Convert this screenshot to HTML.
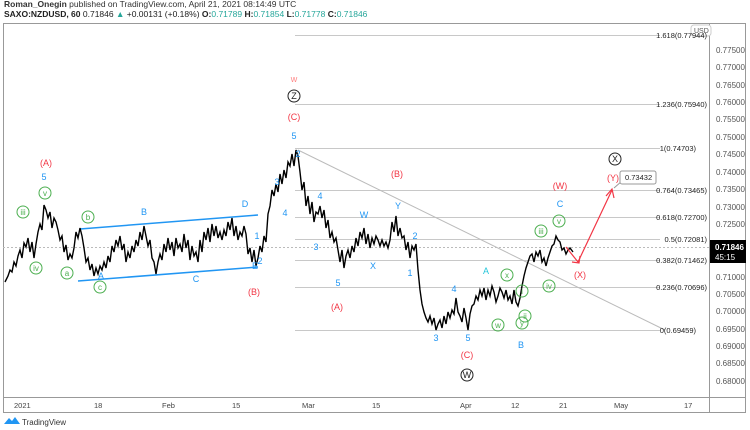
<!DOCTYPE html>
<html><head><meta charset="utf-8"><style>
html,body{margin:0;padding:0;background:#fff;width:750px;height:430px;overflow:hidden;font-family:"Liberation Sans",sans-serif}
svg{position:absolute;left:0;top:0}
</style></head><body>
<svg width="750" height="430" viewBox="0 0 750 430" font-family="Liberation Sans, sans-serif">
<text x="4" y="7" font-size="8.5" fill="#333"><tspan font-weight="bold">Roman_Onegin</tspan> published on TradingView.com, April 21, 2021 08:14:49 UTC</text>
<text x="4" y="17" font-size="8.5" fill="#222"><tspan font-weight="bold">SAXO:NZDUSD, 60</tspan> 0.71846 <tspan fill="#26a69a">▲</tspan> +0.00131 (+0.18%) <tspan font-weight="bold">O:</tspan><tspan fill="#26a69a">0.71789</tspan> <tspan font-weight="bold">H:</tspan><tspan fill="#26a69a">0.71854</tspan> <tspan font-weight="bold">L:</tspan><tspan fill="#26a69a">0.71778</tspan> <tspan font-weight="bold">C:</tspan><tspan fill="#26a69a">0.71846</tspan></text>
<rect x="3.5" y="23.5" width="742" height="389" fill="none" stroke="#999"/>
<line x1="709.5" y1="23" x2="709.5" y2="413" stroke="#999"/>
<line x1="3" y1="397.5" x2="745" y2="397.5" stroke="#999"/>
<g font-size="8" fill="#555">
<rect x="691" y="25" width="20" height="11" rx="3" fill="#fff" stroke="#ccc"/><text x="694" y="33" font-size="7">USD</text>
<text x="716" y="53">0.77500</text><text x="716" y="70">0.77000</text><text x="716" y="88">0.76500</text><text x="716" y="105">0.76000</text><text x="716" y="122">0.75500</text><text x="716" y="140">0.75000</text><text x="716" y="157">0.74500</text><text x="716" y="175">0.74000</text><text x="716" y="192">0.73500</text><text x="716" y="210">0.73000</text><text x="716" y="227">0.72500</text><text x="716" y="280">0.71000</text><text x="716" y="297">0.70500</text><text x="716" y="314">0.70000</text><text x="716" y="332">0.69500</text><text x="716" y="349">0.69000</text><text x="716" y="366">0.68500</text><text x="716" y="384">0.68000</text>
</g>
<rect x="710" y="240" width="36" height="23" fill="#000"/>
<text x="715" y="250" font-size="8" fill="#fff" font-weight="bold">0.71846</text>
<text x="715" y="260" font-size="8" fill="#fff">45:15</text>
<g font-size="7.5" fill="#444">
<text x="14" y="408">2021</text><text x="94" y="408">18</text><text x="162" y="408">Feb</text><text x="232" y="408">15</text><text x="302" y="408">Mar</text><text x="372" y="408">15</text><text x="460" y="408">Apr</text><text x="511" y="408">12</text><text x="559" y="408">21</text><text x="614" y="408">May</text><text x="684" y="408">17</text>
</g>
<g stroke="#c8c8c8" stroke-width="1">
<line x1="295" y1="35.5" x2="660" y2="35.5"/><line x1="295" y1="104.5" x2="660" y2="104.5"/><line x1="295" y1="148.5" x2="660" y2="148.5"/><line x1="295" y1="190.5" x2="660" y2="190.5"/><line x1="295" y1="217.5" x2="660" y2="217.5"/><line x1="295" y1="239.5" x2="660" y2="239.5"/><line x1="295" y1="260.5" x2="660" y2="260.5"/><line x1="295" y1="287.5" x2="660" y2="287.5"/><line x1="295" y1="330.5" x2="660" y2="330.5"/>
<line x1="3" y1="247.5" x2="709" y2="247.5" stroke-dasharray="2 2" stroke="#bbb"/>
<line x1="298" y1="150" x2="665" y2="330" stroke="#bbb"/>
</g>
<g font-size="7.5" fill="#222" text-anchor="end">
<text x="707" y="38">1.618(0.77944)</text><text x="707" y="107">1.236(0.75940)</text><text x="696" y="151">1(0.74703)</text><text x="707" y="193">0.764(0.73465)</text><text x="707" y="220">0.618(0.72700)</text><text x="707" y="242">0.5(0.72081)</text><text x="707" y="263">0.382(0.71462)</text><text x="707" y="290">0.236(0.70696)</text><text x="696" y="333">0(0.69459)</text>
</g>
<line x1="80" y1="229" x2="258" y2="215" stroke="#2196f3" stroke-width="1.5"/>
<line x1="78" y1="281" x2="258" y2="267" stroke="#2196f3" stroke-width="1.5"/>
<polyline fill="none" stroke="#000" stroke-width="1.4" stroke-linejoin="miter" points="5,282 8,276 10,270 12,272 14,262 16,266 18,256 20,250 22,258 24,243 26,247 28,238 30,252 32,242 34,258 36,244 38,232 40,224 42,230 44,205 46,210 48,218 50,212 52,228 54,218 56,222 58,230 60,240 62,236 64,252 66,245 68,260 70,254 72,258 74,248 76,232 78,238 80,228 82,236 84,248 86,262 88,258 90,270 92,264 94,276 96,268 98,274 100,266 102,270 104,262 106,268 108,256 110,262 112,246 114,252 116,240 118,246 120,236 122,250 124,244 126,262 128,252 130,258 132,246 134,252 136,240 138,246 140,232 142,240 144,226 146,236 148,246 150,240 152,258 154,262 156,274 158,262 160,254 162,260 164,244 166,252 168,238 170,250 172,242 174,256 176,238 178,248 180,244 182,252 184,234 186,248 188,240 190,260 192,246 194,256 196,252 198,262 200,240 202,252 204,232 206,240 208,228 210,242 212,224 214,236 216,226 218,238 220,232 222,240 224,230 226,236 228,222 230,230 232,218 234,236 236,226 238,240 240,232 242,236 244,226 246,234 248,254 250,248 252,262 254,250 256,266 258,258 260,246 262,252 264,236 266,242 268,214 270,206 272,190 274,196 276,184 278,192 280,174 282,184 284,170 286,178 288,162 290,166 292,154 294,166 296,150 298,156 300,172 302,190 304,182 306,206 308,196 310,214 312,202 314,222 316,212 318,214 320,206 322,218 324,210 326,228 328,220 330,238 332,232 334,242 336,238 340,262 342,250 344,268 346,256 348,250 350,258 352,246 354,252 356,238 358,246 360,232 362,238 364,228 366,244 368,234 370,248 372,238 374,244 376,236 378,240 380,246 382,240 384,246 386,242 388,248 390,240 392,222 394,232 396,216 398,236 400,228 402,238 404,236 406,250 408,242 410,258 412,246 414,250 416,244 418,270 420,290 422,304 424,312 426,318 428,322 430,316 432,324 434,318 436,330 438,324 440,320 442,328 444,316 446,324 448,312 450,318 452,310 454,314 456,298 458,312 460,316 462,322 464,308 466,318 468,330 470,314 472,306 474,304 476,296 478,300 480,290 482,296 484,288 486,300 488,290 490,296 492,286 494,292 496,302 498,296 500,288 502,292 504,298 506,290 508,300 510,296 512,304 514,290 516,302 518,306 520,298 522,286 524,276 526,268 528,262 530,256 532,254 534,262 536,252 538,256 540,250 542,262 544,258 546,266 548,258 550,252 552,246 554,244 556,236 558,240 560,242 562,250 564,248 566,254 568,250 570,248 573,252"/>
<polyline fill="none" stroke="#f23645" stroke-width="1.2" points="566,247 578,262 612,190"/>
<polyline fill="none" stroke="#f23645" stroke-width="1.2" points="572,262 579,263 580,256"/>
<polyline fill="none" stroke="#f23645" stroke-width="1.2" points="606,196 612,189 614,198"/>
<line x1="614" y1="188" x2="622" y2="181" stroke="#999"/>
<rect x="620" y="171" width="36" height="13" rx="2" fill="#fff" stroke="#999"/>
<text x="625" y="180" font-size="7.5" fill="#222">0.73432</text>
<g font-size="9" text-anchor="middle">
<g fill="#f23645">
<text x="46" y="166">(A)</text><text x="254" y="295">(B)</text><text x="294" y="120">(C)</text><text x="397" y="177">(B)</text><text x="337" y="310">(A)</text><text x="467" y="358">(C)</text><text x="560" y="189">(W)</text><text x="580" y="278">(X)</text><text x="613" y="181">(Y)</text><text x="294" y="82" fill="#f88" font-size="9">w</text>
</g>
<g fill="#2196f3">
<text x="44" y="180">5</text><text x="101" y="279">A</text><text x="144" y="215">B</text><text x="196" y="282">C</text><text x="245" y="207">D</text><text x="255" y="269">E</text><text x="260" y="264">2</text><text x="257" y="239">1</text><text x="277" y="185">3</text><text x="285" y="216">4</text><text x="294" y="139">5</text><text x="298" y="157">2</text><text x="320" y="199">4</text><text x="316" y="250">3</text><text x="338" y="286">5</text><text x="364" y="218">W</text><text x="373" y="269">X</text><text x="398" y="209">Y</text><text x="415" y="239">2</text><text x="410" y="276">1</text><text x="454" y="292">4</text><text x="436" y="341">3</text><text x="468" y="341">5</text><text x="521" y="348">B</text><text x="560" y="207">C</text><text x="486" y="274" fill="#26c6da">A</text>
</g>
<g fill="#4caf50" font-size="8">
<circle cx="23" cy="212" r="6" fill="none" stroke="#4caf50"/><text x="23" y="215">iii</text>
<circle cx="45" cy="193" r="6" fill="none" stroke="#4caf50"/><text x="45" y="196">v</text>
<circle cx="36" cy="268" r="6" fill="none" stroke="#4caf50"/><text x="36" y="271">iv</text>
<circle cx="67" cy="273" r="6" fill="none" stroke="#4caf50"/><text x="67" y="276">a</text>
<circle cx="88" cy="217" r="6" fill="none" stroke="#4caf50"/><text x="88" y="220">b</text>
<circle cx="100" cy="287" r="6" fill="none" stroke="#4caf50"/><text x="100" y="290">c</text>
<circle cx="507" cy="275" r="6" fill="none" stroke="#4caf50"/><text x="507" y="278">x</text>
<circle cx="498" cy="325" r="6" fill="none" stroke="#4caf50"/><text x="498" y="328">w</text>
<circle cx="522" cy="291" r="6" fill="none" stroke="#4caf50"/><text x="522" y="294">i</text>
<circle cx="525" cy="316" r="6" fill="none" stroke="#4caf50"/><text x="525" y="319">ii</text>
<circle cx="522" cy="323" r="6" fill="none" stroke="#4caf50"/><text x="522" y="326">y</text>
<circle cx="541" cy="231" r="6" fill="none" stroke="#4caf50"/><text x="541" y="234">iii</text>
<circle cx="549" cy="286" r="6" fill="none" stroke="#4caf50"/><text x="549" y="289">iv</text>
<circle cx="559" cy="221" r="6" fill="none" stroke="#4caf50"/><text x="559" y="224">v</text>
</g>
<g fill="#222">
<circle cx="294" cy="96" r="6" fill="none" stroke="#222"/><text x="294" y="99">Z</text>
<circle cx="467" cy="375" r="6" fill="none" stroke="#222"/><text x="467" y="378">W</text>
<circle cx="615" cy="159" r="6" fill="none" stroke="#222"/><text x="615" y="162">X</text>
</g>
</g>
<path d="M4 424 L9 418 L12 421 L15 417 L20 424 Z" fill="#2196f3"/>
<text x="22" y="425" font-size="8" fill="#333">TradingView</text>
</svg>
</body></html>
